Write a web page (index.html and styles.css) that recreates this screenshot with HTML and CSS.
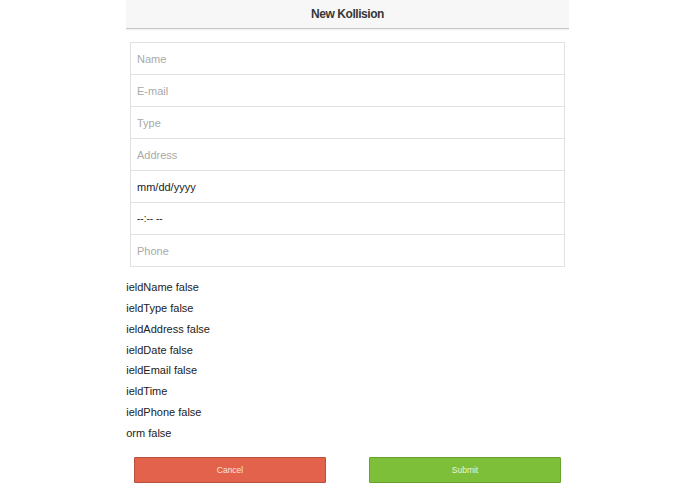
FILE: index.html
```html
<!DOCTYPE html>
<html>
<head>
<meta charset="utf-8">
<title>New Kollision</title>
<link rel="stylesheet" href="styles.css">
</head>
<body>
<div class="page">
  <header class="bar">
    <h1 class="title">New Kollision</h1>
  </header>
  <form class="form">
    <div class="fields">
      <input class="field" type="text" placeholder="Name">
      <input class="field" type="text" placeholder="E-mail">
      <input class="field" type="text" placeholder="Type">
      <input class="field" type="text" placeholder="Address">
      <input class="field field-value" type="text" value="mm/dd/yyyy">
      <input class="field field-value field-time" type="text" value="--:-- --">
      <input class="field" type="text" placeholder="Phone">
    </div>
    <ul class="debug">
      <li>FieldName false</li>
      <li>FieldType false</li>
      <li>FieldAddress false</li>
      <li>FieldDate false</li>
      <li>FieldEmail false</li>
      <li>FieldTime</li>
      <li>FieldPhone false</li>
      <li>Form false</li>
    </ul>
    <div class="actions">
      <button type="button" class="btn btn-cancel">Cancel</button>
      <button type="button" class="btn btn-submit">Submit</button>
    </div>
  </form>
</div>
</body>
</html>
```
FILE: styles.css
```css
html, body {
  margin: 0;
  padding: 0;
  background: #fff;
}
body {
  font-family: "Liberation Sans", Arial, sans-serif;
  color: #222;
}
.page {
  width: 443px;
  margin: 0 auto;
  overflow: hidden;
  height: 494px;
}
.bar {
  height: 28px;
  background: #f7f7f7;
  border-bottom: 1px solid #c9c9c9;
  box-shadow: 0 1px 1px rgba(0,0,0,0.06);
}
.title {
  margin: 0;
  font-size: 12px;
  font-weight: bold;
  letter-spacing: -0.45px;
  line-height: 28px;
  text-align: center;
  color: #383838;
}
.form {
  margin: 0;
}
.fields {
  margin: 13px 4px 0;
  border: 1px solid #e2e2e2;
  border-bottom: none;
  display: flex;
  flex-direction: column;
}
.field {
  display: block;
  box-sizing: border-box;
  height: 32px;
  margin: 0;
  padding: 0 6px;
  border: none;
  border-bottom: 1px solid #e2e2e2;
  font-family: "Liberation Sans", Arial, sans-serif;
  font-size: 11px;
  color: #222;
  outline: none;
  background: #fff;
}
.field::placeholder {
  color: #a9a9a9;
}
.field-time {
  font-size: 10px;
}
.debug {
  list-style: none;
  margin: 10px 0 0 -6.5px;
  padding: 0;
  font-size: 11px;
  line-height: 20.86px;
  color: #222;
}
.actions {
  display: flex;
  justify-content: space-between;
  padding: 0 8px;
  margin-top: 13px;
}
.btn {
  width: 192px;
  height: 26px;
  box-sizing: border-box;
  border-radius: 1px;
  font-family: "Liberation Sans", Arial, sans-serif;
  font-size: 8.5px;
  color: #fff;
  padding: 0;
  cursor: pointer;
}
.btn-cancel {
  background: #e2624b;
  border: 1px solid #b8503e;
  color: #fbe2dc;
}
.btn-submit {
  background: #7dbf38;
  border: 1px solid #66a32c;
  color: #e8f5da;
}
```
